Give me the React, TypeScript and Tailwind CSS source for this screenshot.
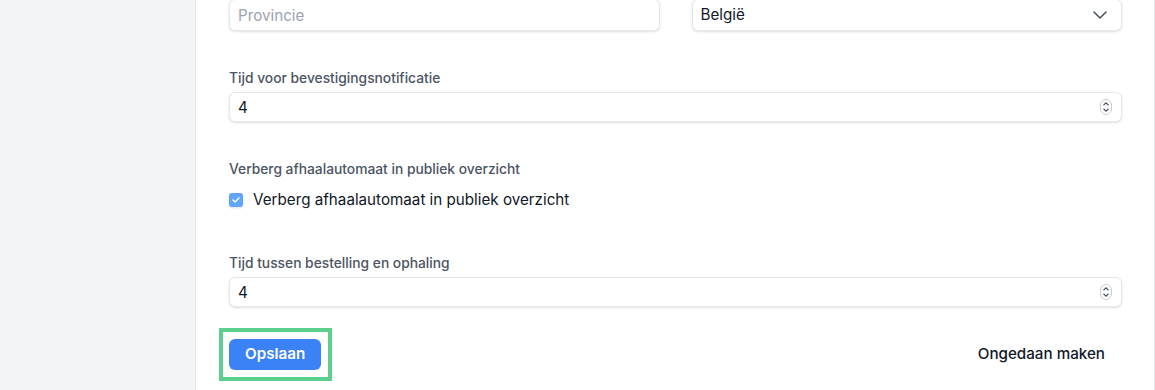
import React from 'react';

// --- kleine UI-onderdelen ---

const Label = ({ children }: { children: React.ReactNode }) => (
  <label className="block text-[13.8px] font-medium text-[#4b5563] leading-5 mb-1">{children}</label>
);

const Stepper = () => (
  <svg width="12" height="16" viewBox="0 0 12 16" className="absolute right-[10px] top-1/2 -translate-y-1/2">
    <rect x="0.5" y="0.5" width="11" height="15" rx="5.5" fill="none" stroke="#c9cdd3" />
    <path d="M3.5 6.2 L6 3.9 L8.5 6.2" fill="none" stroke="#4b5563" strokeWidth="1.2" />
    <path d="M3.5 9.8 L6 12.1 L8.5 9.8" fill="none" stroke="#4b5563" strokeWidth="1.2" />
  </svg>
);

const NumberField = ({ value }: { value: string }) => (
  <div className="relative">
    <input
      type="text"
      defaultValue={value}
      className="w-full h-[30px] rounded-md border border-[#e5e7eb] bg-white px-2 text-[15.2px] text-[#111827] shadow-sm outline-none"
    />
    <Stepper />
  </div>
);

// --- pagina ---

export default function App() {
  return (
    <div className="flex h-[390px] w-full overflow-hidden bg-white font-['Inter',sans-serif]">
      {/* zijbalk */}
      <div className="w-[196px] shrink-0 bg-[#f3f4f6] border-r border-[#e5e7eb]" />

      {/* formulier */}
      <div className="flex-1 border-r border-[#e5e7eb] pl-[33px] pr-[32px]">
        <div className="grid grid-cols-2 gap-8 -mt-px">
          <input
            type="text"
            placeholder="Provincie"
            className="w-full h-[32px] rounded-md border border-[#e5e7eb] bg-white px-2 text-[15.2px] text-[#111827] placeholder:text-[#9ca3af] shadow-sm outline-none"
          />
          <div className="relative h-[32px] rounded-md border border-[#e5e7eb] bg-white shadow-sm flex items-center px-2 text-[15.2px] text-[#111827]">
            België
            <svg width="14" height="8" viewBox="0 0 14 8" className="absolute right-[14px] top-1/2 -translate-y-1/2">
              <path d="M1 1 L7 7 L13 1" fill="none" stroke="#4b5563" strokeWidth="1.6" strokeLinecap="round" strokeLinejoin="round" />
            </svg>
          </div>
        </div>

        <div className="mt-[37px]">
          <Label>Tijd voor bevestigingsnotificatie</Label>
          <NumberField value="4" />
        </div>

        <div className="mt-[37px]">
          <Label>Verberg afhaalautomaat in publiek overzicht</Label>
          <div className="flex items-center gap-[10px] mt-[9px]">
            <span className="w-[14px] h-[14px] rounded-[3px] bg-[#60a5fa] flex items-center justify-center shadow-sm">
              <svg width="8" height="6" viewBox="0 0 8 6">
                <path d="M1 3 L3 5 L7 1" fill="none" stroke="white" strokeWidth="1.4" strokeLinecap="round" strokeLinejoin="round" />
              </svg>
            </span>
            <span className="text-[15.2px] text-[#111827] leading-6">Verberg afhaalautomaat in publiek overzicht</span>
          </div>
        </div>

        <div className="mt-[41px]">
          <Label>Tijd tussen bestelling en ophaling</Label>
          <NumberField value="4" />
        </div>

        <div className="flex items-center justify-between mt-[32px]">
          <div className="relative">
            <button className="h-[31px] rounded-md bg-[#3b82f6] px-4 text-[15.2px] font-semibold text-white">Opslaan</button>
            <span className="absolute -left-[10px] -right-[11px] -top-[11px] -bottom-[11px] border-4 border-[#5ccf8f] pointer-events-none" />
          </div>
          <button className="h-[31px] px-[17px] text-[15.2px] font-medium text-[#111827]">Ongedaan maken</button>
        </div>
      </div>
    </div>
  );
}
